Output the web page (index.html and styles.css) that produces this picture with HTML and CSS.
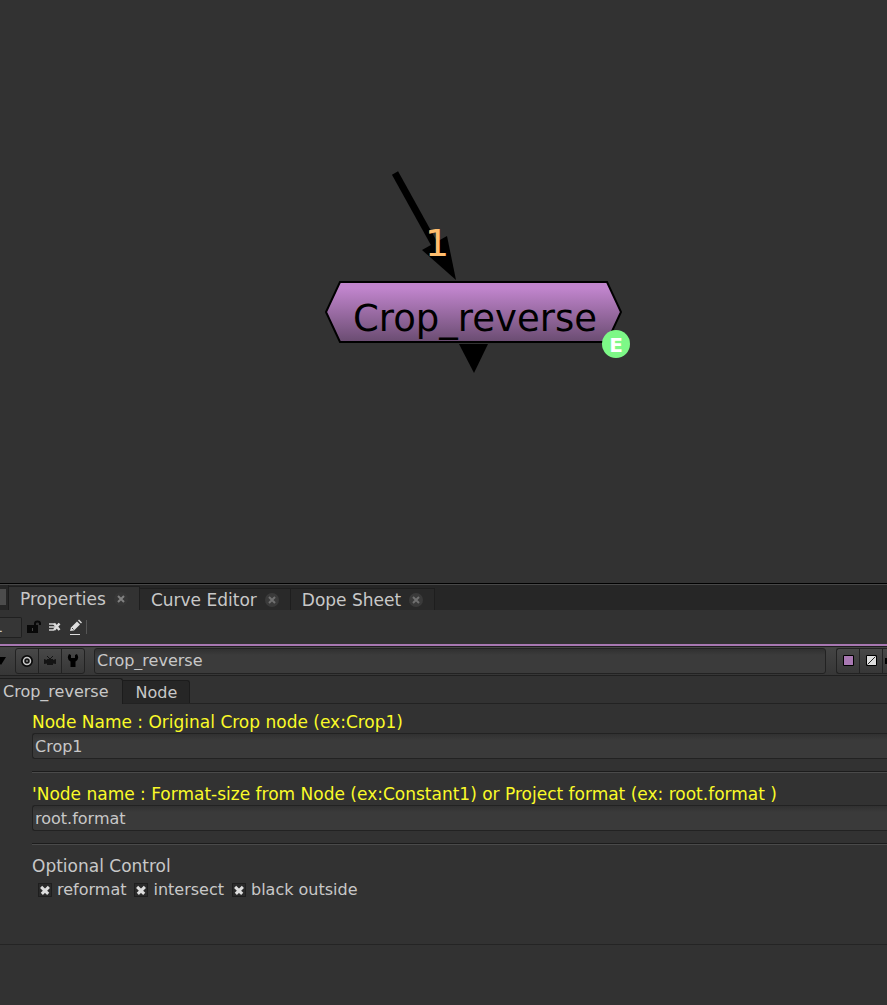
FILE: index.html
```html
<!DOCTYPE html>
<html lang="en">
<head>
<meta charset="utf-8">
<title>Crop_reverse</title>
<link rel="stylesheet" href="styles.css">
</head>
<body>
<main class="graph">
  <svg class="graph-node" width="340" height="230" viewBox="310 160 340 230" role="img" aria-label="Crop_reverse node">
    <defs>
      <linearGradient id="node-fill" x1="0" y1="0" x2="0" y2="1">
        <stop offset="0.1" stop-color="#c185cd"/>
        <stop offset="1" stop-color="#6a4c71"/>
      </linearGradient>
    </defs>
    <path d="M395 173L436 247" stroke="#000" stroke-width="7"/>
    <path d="M456 280L422 250L447 236Z"/>
    <path d="M459 344H488L474 373Z"/>
    <path d="M340 282H607L621 312L607 342H340L326 312Z" fill="url(#node-fill)" stroke="#000" stroke-width="2"/>
    <text class="input-number" x="425" y="256">1</text>
    <text class="node-name" x="353" y="331">Crop_reverse</text>
    <circle cx="616" cy="344" r="14" fill="#7df887"/>
    <text class="badge-letter" x="616" y="352">E</text>
  </svg>
</main>

<section class="panel">
  <nav class="pane-tabs">
    <span class="pane-stub"><i></i></span>
    <div class="pane-tab active"><button type="button" class="tab-name">Properties</button><button type="button" class="close" aria-label="Close Properties"><svg width="14" height="14" viewBox="0 0 14 14"><path d="M4 4l6 6M10 4l-6 6"/></svg></button></div>
    <div class="pane-tab"><button type="button" class="tab-name">Curve Editor</button><button type="button" class="close" aria-label="Close Curve Editor"><svg width="14" height="14" viewBox="0 0 14 14"><path d="M4 4l6 6M10 4l-6 6"/></svg></button></div>
    <div class="pane-tab"><button type="button" class="tab-name">Dope Sheet</button><button type="button" class="close" aria-label="Close Dope Sheet"><svg width="14" height="14" viewBox="0 0 14 14"><path d="M4 4l6 6M10 4l-6 6"/></svg></button></div>
  </nav>

  <div class="toolbar">
    <input class="count" type="text" value="1" aria-label="Maximum panels">
    <button type="button" class="tool" aria-label="Lock panels"><svg width="14" height="14" viewBox="0 0 14 14"><path d="M0 5H11V13H0Z" fill="#080808"/><path d="M8 6V3.500Q8 1.500 10.500 1.500Q13 1.500 13 3.500V5" fill="none" stroke="#080808" stroke-width="2"/><path d="M5.500 8V11" stroke="#444" stroke-width="1"/></svg></button>
    <button type="button" class="tool" aria-label="Close all panels"><svg width="12" height="14" viewBox="0 0 12 14"><path d="M0 3H5V5H0ZM0 6H6V8H0ZM0 9H5V11H0Z" fill="#aaa"/><path d="M5 3.500L10.500 10M10.500 3.500L5 10" stroke="#ddd" stroke-width="2.500"/></svg></button>
    <button type="button" class="tool" aria-label="Edit"><svg width="14" height="16" viewBox="0 0 14 16"><path d="M1 12L2 8.500L8 2.500L11 5.500L5 11.500Z" fill="#ddd"/><path d="M9 1.500L10 .5L13 3.500L12 4.500Z" fill="#ddd"/><path d="M3 9L4.500 10.500" stroke="#444"/><path d="M1 15.500H11" stroke="#ddd"/></svg></button>
    <span class="tool-divider"></span>
  </div>

  <div class="node-header">
    <button type="button" class="collapse" aria-label="Collapse"><svg width="7" height="8" viewBox="0 0 7 8"><path d="M-5 0H6L1 8Z"/></svg></button>
    <div class="button-group">
      <button type="button" aria-label="Center node"><svg width="12" height="12" viewBox="0 0 12 12"><circle cx="6" cy="6" r="4" fill="#333" stroke="#0a0a0a" stroke-width="4"/><circle cx="6" cy="6" r="3.500" fill="#181818" stroke="#ccc" stroke-width="1.500"/><circle cx="6" cy="6" r="1" fill="#888"/></svg></button>
      <button type="button" aria-label="Node inputs"><svg width="14" height="12" viewBox="0 0 14 12"><path d="M1 4L4 5V4H10V5L13 4V9L10 8.500V10H4V8.500L1 9Z" fill="#141414"/><path d="M4 1L7 4L10 1" fill="none" stroke="#141414"/></svg></button>
      <button type="button" aria-label="Settings"><svg width="12" height="15" viewBox="0 0 12 15"><path d="M2 1Q-1 6 3.500 8.500V14H8.500V8.500Q13 6 10 1L8 2V5H4V2Z"/></svg></button>
    </div>
    <input class="name-field" type="text" value="Crop_reverse" aria-label="Node name">
    <div class="button-group end">
      <button type="button" aria-label="Node colour"><svg width="11" height="11" viewBox="0 0 11 11"><path d="M.5 .5H10.500V10.500H.5Z" fill="#a878b2" stroke="#000"/></svg></button>
      <button type="button" aria-label="Viewer colour"><svg width="11" height="11" viewBox="0 0 11 11"><path d="M.5 .5H10.500V10.500H.5Z" fill="#ddd" stroke="#000"/><path d="M1.500 9.500L9.500 1.500" stroke="#222" stroke-width="1"/></svg></button>
      <button type="button" class="clipped" aria-label="Help"><svg width="4" height="8" viewBox="0 0 4 8"><path d="M2 1H4V7H2Z"/></svg></button>
    </div>
  </div>

  <nav class="node-tabs">
    <button type="button" class="node-tab active">Crop_reverse</button>
    <button type="button" class="node-tab">Node</button>
  </nav>

  <form class="controls">
    <div class="field">
      <label for="original">Node Name : Original Crop node (ex:Crop1)</label>
      <input id="original" type="text" value="Crop1">
    </div>
    <div class="field">
      <label for="format">'Node name : Format-size from Node (ex:Constant1) or Project format (ex: root.format )</label>
      <input id="format" type="text" value="root.format">
    </div>
    <fieldset class="options">
      <legend>Optional Control</legend>
      <div class="checks">
        <label><input type="checkbox" checked>reformat</label>
        <label><input type="checkbox" checked>intersect</label>
        <label><input type="checkbox" checked>black outside</label>
      </div>
    </fieldset>
  </form>
  <div class="panel-foot"></div>
</section>
</body>
</html>
```
FILE: styles.css
```css
* { box-sizing: border-box; }

body {
  margin: 0;
  min-height: 100vh;
  display: flex;
  flex-direction: column;
  background: #323232;
  color: #c8c8c8;
  font: 16px/24px "DejaVu Sans", Verdana, sans-serif;
  overflow-x: hidden;
}

button, input { font: inherit; color: inherit; }
button { padding: 0; border: 0; background: none; }
svg { display: block; }

/* Node graph */
.graph { position: relative; flex: 1; min-height: 400px; }
.graph-node { position: absolute; left: 310px; top: 160px; }
.node-name { font-size: 37px; }
.input-number { font-size: 38px; fill: #ffbe6e; }
.badge-letter { font-size: 20px; font-weight: bold; fill: #fff; text-anchor: middle; }

/* Pane tabs */
.panel { border-top: 1px solid #000; }
.pane-tabs {
  display: flex;
  height: 26px;
  border-top: 1px solid #484848;
  background: #262626;
  font-size: 17px;
}
.pane-stub { width: 9px; padding-top: 4px; border-right: 1px solid #1c1c1c; }
.pane-stub i { display: block; width: 6px; height: 16px; background: #4c4c4c; }
.pane-tab {
  display: flex;
  align-items: center;
  gap: 8px;
  padding: 0 11px;
  margin-top: 3px;
  border: 1px solid #1e1e1e;
  border-width: 1px 1px 0 0;
  background: #292929;
}
.pane-tab.active { margin-top: 1px; background: #323232; }
.close svg { border-radius: 50%; background: #3a3a3a; }
.close path { stroke: #707070; stroke-width: 2; }
.active .close svg { background: #363636; }
.active .close path { stroke: #808080; }

/* Toolbar */
.toolbar {
  display: flex;
  align-items: center;
  gap: 8px;
  height: 34px;
}
.count {
  width: 22px;
  height: 21px;
  padding: 0;
  border: 1px solid #202020;
  border-left: 0;
  border-radius: 0 2px 2px 0;
  background: #363636;
  text-indent: -7px;
}
.count, .tool-divider { margin-right: -3px; }
.tool-divider { width: 1px; height: 14px; margin-left: -5px; background: #555; }

/* Node header */
.node-header {
  display: flex;
  align-items: center;
  height: 32px;
  border-top: 2px solid #a878b2;
  border-bottom: 1px solid #202020;
  background: linear-gradient(#1e1e1e 1px, #444 1px, #363636);
}
.collapse { width: 15px; }
.button-group {
  display: flex;
  height: 26px;
  border: 1px solid #222;
  border-radius: 3px;
  background: linear-gradient(#484848, #373737);
}
.button-group button { width: 22px; display: grid; place-items: center; }
.button-group button + button { width: 23px; border-left: 1px solid #222; }
.button-group.end { border-right: 0; border-radius: 3px 0 0 3px; }
.button-group button.clipped { width: 5px; }
.name-field {
  flex: 1;
  min-width: 0;
  height: 26px;
  margin: 0 10px 0 9px;
  padding: 0 2px;
  border: 1px solid #222;
  border-radius: 3px;
  background: linear-gradient(#303030, #3b3b3b 6px);
}

/* Node tabs */
.node-tabs { display: flex; align-items: end; height: 28px; border-bottom: 1px solid #222; }
.node-tab {
  height: 23px;
  padding: 0 12px;
  border: 1px solid #1c1c1c;
  border-width: 1px 1px 0 0;
  border-radius: 0 3px 0 0;
  background: #262626;
}
.node-tab.active {
  height: 26px;
  margin-bottom: -1px;
  padding: 0 14px 0 3px;
  background: #323232;
}

/* Controls */
.controls { padding: 7px 0 42px 32px; }
.field { margin-bottom: 10px; padding-bottom: 13px; border-bottom: 1px solid #4a4a4a; box-shadow: inset 0 -1px #1c1c1c; }
.field label { display: block; color: #fafa28; font-size: 17px; line-height: 22px; white-space: nowrap; }
.field input {
  display: block;
  width: 100%;
  height: 26px;
  padding: 0 2px;
  border: 1px solid #222;
  border-right: 0;
  border-radius: 3px 0 0 3px;
  background: linear-gradient(#313131, #3a3a3a 6px);
}
.options { margin: 0; padding: 0; border: 0; }
.options legend { padding: 0; font-size: 17px; line-height: 23px; }
.checks { display: flex; gap: 8px; padding-left: 6px; }
.checks label { display: flex; align-items: center; gap: 5px; }
.checks input {
  appearance: none;
  display: grid;
  place-items: center;
  width: 14px;
  height: 14px;
  margin: 0;
  border: 1px solid #1e1e1e;
  background: #2a2a2a;
}
.checks input:checked::before {
  content: "";
  width: 10px;
  height: 10px;
  background: linear-gradient(#ddd, #ddd) center / 100% 3px no-repeat, linear-gradient(#ddd, #ddd) center / 3px 100% no-repeat;
  transform: rotate(45deg);
}
.panel-foot { height: 61px; border-top: 1px solid #242424; }
```
